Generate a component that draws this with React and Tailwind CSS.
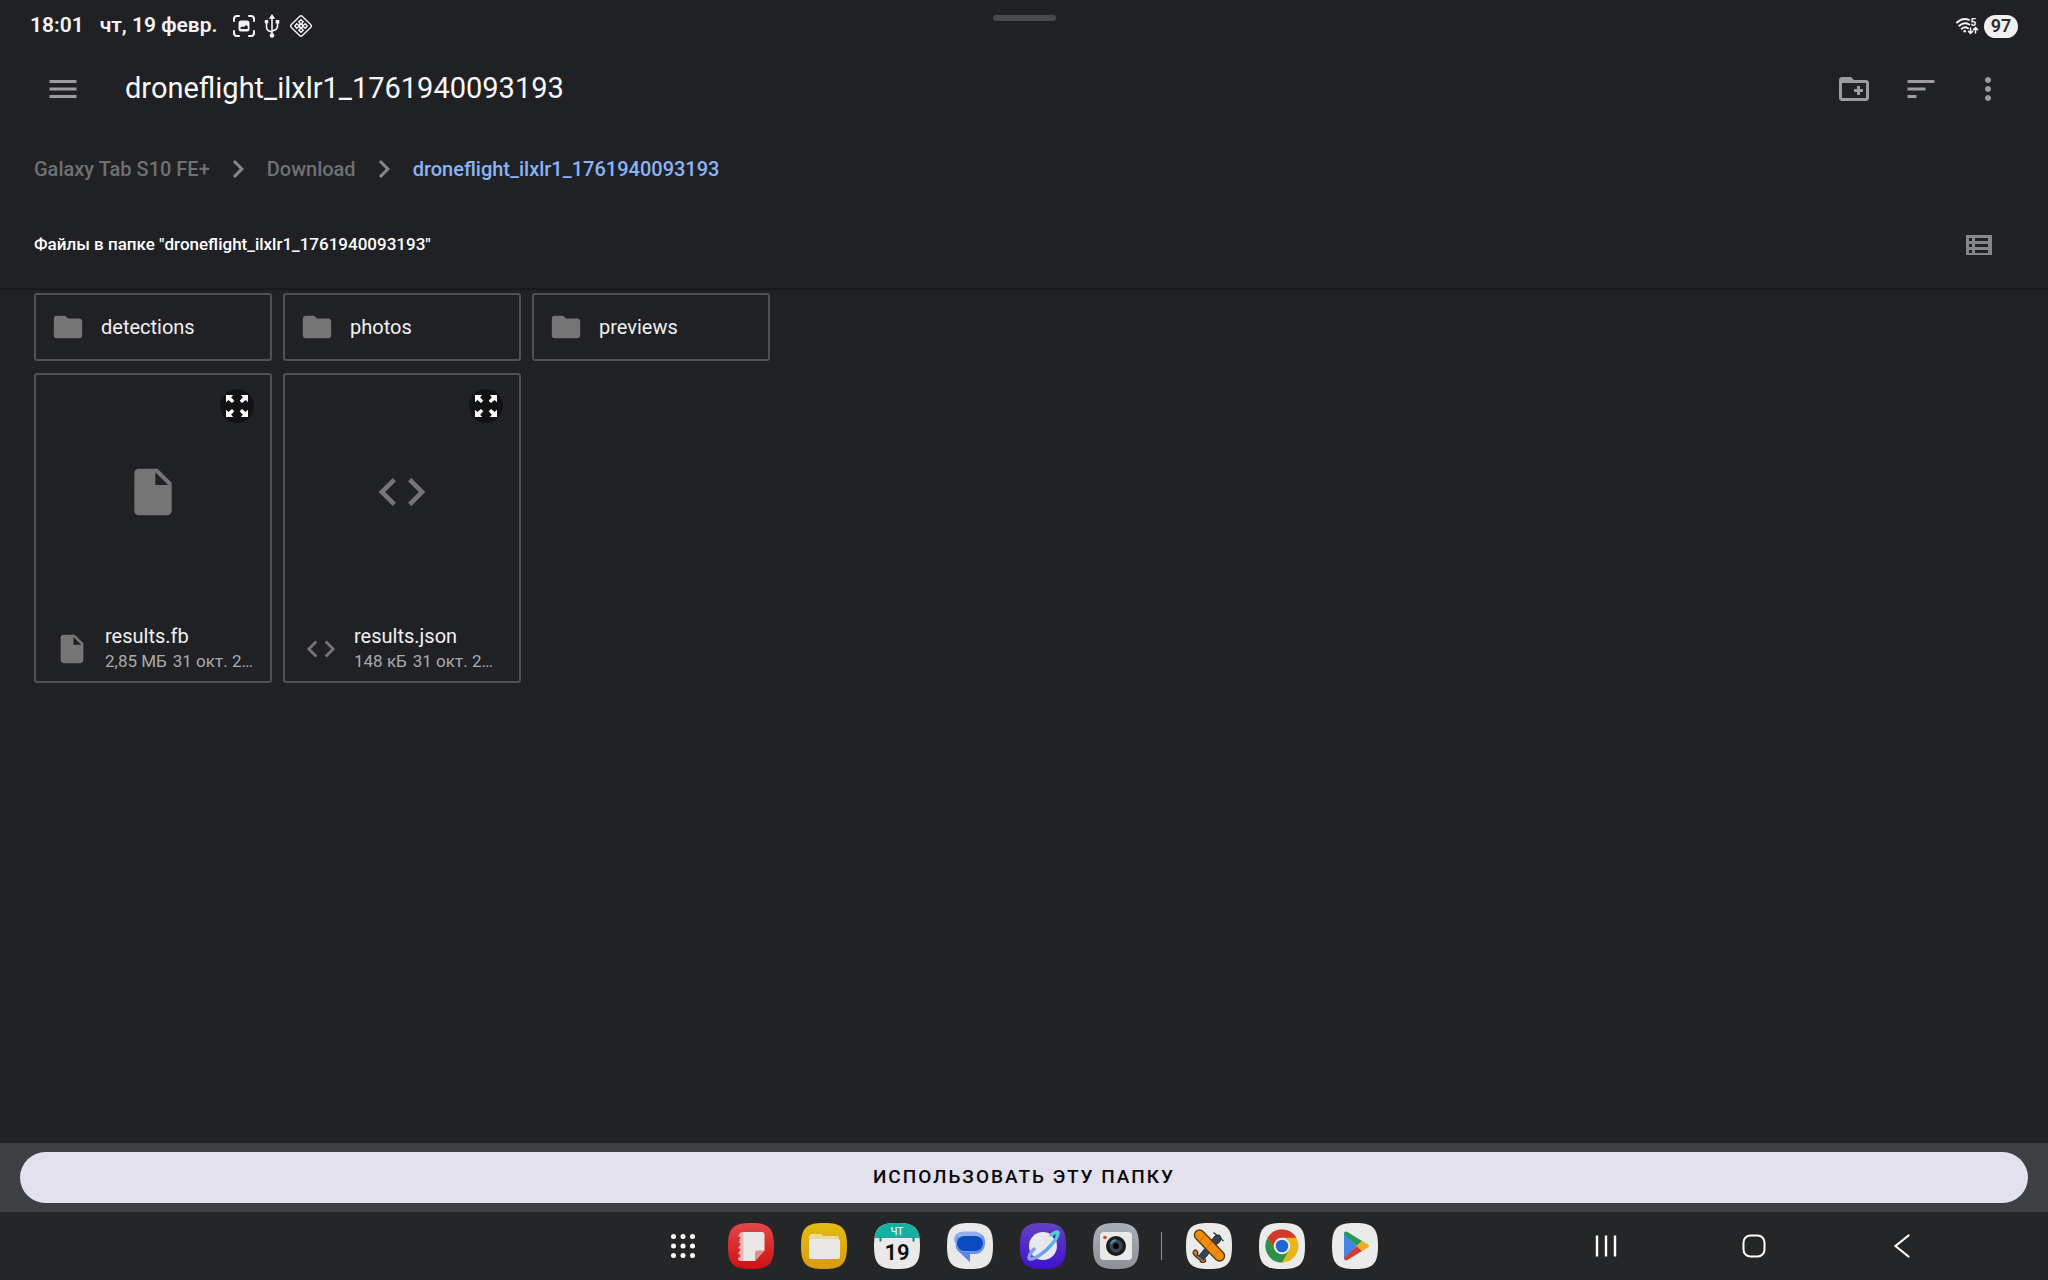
import React from "react";

const SQUIRCLE = "M0 23C0 5 5 0 23 0S46 5 46 23 41 46 23 46 0 41 0 23Z";

function Glyph({ d, className }) {
  return (
    <svg viewBox="0 0 24 24" fill="currentColor" className={className} aria-hidden="true">
      <path d={d} />
    </svg>
  );
}

const paths = {
  menu: "M3 18h18v-2H3v2zm0-5h18v-2H3v2zm0-7v2h18V6H3z",
  newFolder:
    "M20 6h-8l-2-2H4c-1.11 0-1.99.89-1.99 2L2 18c0 1.11.89 2 2 2h16c1.11 0 2-.89 2-2V8c0-1.11-.89-2-2-2zm0 12H4V8h16v10zm-8-4h2v2h2v-2h2v-2h-2v-2h-2v2h-2z",
  sort: "M3 18h6v-2H3v2zM3 6v2h18V6H3zm0 7h12v-2H3v2z",
  more: "M12 8c1.1 0 2-.9 2-2s-.9-2-2-2-2 .9-2 2 .9 2 2 2zm0 2c-1.1 0-2 .9-2 2s.9 2 2 2 2-.9 2-2-.9-2-2-2zm0 6c-1.1 0-2 .9-2 2s.9 2 2 2 2-.9 2-2-.9-2-2-2z",
  chevron: "M10 6L8.59 7.41 13.17 12l-4.58 4.59L10 18l6-6z",
  folder: "M10 4H4c-1.1 0-1.99.9-1.99 2L2 18c0 1.1.9 2 2 2h16c1.1 0 2-.9 2-2V8c0-1.1-.9-2-2-2h-8l-2-2z",
  file: "M6 2c-1.1 0-1.99.9-1.99 2L4 20c0 1.1.89 2 1.99 2H18c1.1 0 2-.9 2-2V8l-6-6H6zm7 7V3.500L18.500 9H13z",
  code: "M9.400 16.600L4.800 12l4.600-4.600L8 6l-6 6 6 6 1.400-1.400zm5.200 0l4.600-4.600-4.600-4.600L16 6l6 6-6 6-1.400-1.400z",
};

function ExpandIcon() {
  const arrow = "M0 0h7.200L5.100 2.200 8.300 5.700 6 8 2.400 4.900 0 7.200z";
  return (
    <svg viewBox="0 0 22 22" className="size-[22px]" fill="currentColor" aria-hidden="true">
      <path d={arrow} />
      <path d={arrow} transform="matrix(-1 0 0 1 22 0)" />
      <path d={arrow} transform="matrix(1 0 0 -1 0 22)" />
      <path d={arrow} transform="matrix(-1 0 0 -1 22 22)" />
    </svg>
  );
}

function CaptureIcon() {
  return (
    <svg viewBox="0 0 22 22" className="size-[22px]" fill="none" stroke="currentColor" strokeWidth="2" strokeLinecap="round" aria-hidden="true">
      <path d="M1 6V4a3 3 0 0 1 3-3h2M16 1h2a3 3 0 0 1 3 3v2M21 16v2a3 3 0 0 1-3 3h-2M6 21H4a3 3 0 0 1-3-3v-2" />
      <rect x="5.500" y="5.500" width="11" height="11" rx="2.500" fill="currentColor" stroke="none" />
      <path d="M7.500 14v-1.500l2-1 1.500.6 2-2.100 1.700 1.200V14z" fill="#202124" stroke="none" />
    </svg>
  );
}

function UsbIcon() {
  return (
    <svg viewBox="0 0 16 24" className="h-6 w-4" fill="none" stroke="currentColor" strokeWidth="1.600" aria-hidden="true">
      <path d="M8 3v18M8 18q-5.500-1-5.500-5V8M8 17q5.500-1 5.500-5V8" />
      <path d="M8 0l3.200 4.800H4.800zM11.700 6h3.600v3.600h-3.600z" fill="currentColor" stroke="none" />
      <circle cx="2.500" cy="7.800" r="2" fill="currentColor" stroke="none" />
      <circle cx="8" cy="21.500" r="2.300" fill="currentColor" stroke="none" />
    </svg>
  );
}

function DiamondIcon() {
  return (
    <svg viewBox="0 0 24 24" className="size-6" fill="none" stroke="currentColor" strokeWidth="1.400" aria-hidden="true">
      <rect x="4.200" y="4.200" width="15.600" height="15.600" rx="2" transform="rotate(45 12 12)" />
      <circle cx="12" cy="12" r="1.700" />
      <path d="M12 10.300L9.800 7.800 12 5.800l2.200 2zM12 13.700l-2.200 2.500 2.200 2 2.200-2zM10.300 12L7.800 9.800 5.800 12l2 2.200zM13.700 12l2.500-2.200 2 2.200-2 2.200z" />
    </svg>
  );
}

function WifiIcon() {
  return (
    <svg viewBox="0 0 24 18" className="h-[18px] w-6" fill="none" stroke="currentColor" strokeWidth="1.900" strokeLinecap="round" aria-hidden="true">
      <path d="M2 5.500C5.500 2 10 1.200 14 2.800M4.300 8.700c3-2.700 7-3 10-1.200M6.700 11.700c2-1.700 4.500-1.700 6.300-.5" />
      <circle cx="9.700" cy="14.200" r="1.300" fill="currentColor" stroke="none" />
      <path d="M15.500 11v5M13.500 14.400l2 2 2-2M20.500 16v-5M18.500 12.600l2-2 2 2" strokeWidth="1.500" />
      <text x="15.500" y="8.500" fontSize="10" fontWeight="700" fill="currentColor" stroke="none">5</text>
    </svg>
  );
}

function ListIcon() {
  return (
    <svg viewBox="0 0 26 20" className="h-5 w-[26px]" aria-hidden="true">
      <rect width="26" height="20" fill="#85868a" />
      <g fill="#202124">
        <rect x="3" y="3" width="3" height="3" />
        <rect x="9" y="3" width="13" height="3" />
        <rect x="3" y="9" width="3" height="3" />
        <rect x="9" y="9" width="13" height="3" />
        <rect x="3" y="15" width="3" height="3" />
        <rect x="9" y="15" width="13" height="3" />
      </g>
    </svg>
  );
}

function Folder({ name }) {
  return (
    <button type="button" className="flex h-[68px] items-center gap-4 rounded-[3px] border-2 border-[#505154] pl-[15px] text-left">
      <Glyph d={paths.folder} className="size-[34px] text-[#757575]" />
      <span className="text-xl text-[#f1f1f3]">{name}</span>
    </button>
  );
}

function File({ name, size, icon }) {
  return (
    <article className="relative flex h-[310px] flex-col rounded-[3px] border-2 border-[#505154]">
      <button type="button" aria-label={"Открыть " + name} className="absolute top-[14px] right-4 flex size-[34px] items-center justify-center rounded-full bg-[#111213] text-white">
        <ExpandIcon />
      </button>
      <div className="flex h-[233px] items-center justify-center text-[#757575]">
        <Glyph d={icon} className="size-14" />
      </div>
      <div className="mt-4 flex items-center gap-4 pl-[19px]">
        <Glyph d={icon} className="size-[34px] shrink-0 text-[#757575]" />
        <div>
          <h2 className="text-xl leading-6 text-[#f1f1f3]">{name}</h2>
          <p className="flex gap-[6px] text-[17px] leading-[26px] whitespace-nowrap text-[#a9aaad]">
            <span>{size}</span>
            <span>31 окт. 2…</span>
          </p>
        </div>
      </div>
    </article>
  );
}

function AppIcon({ label, fill, children }) {
  return (
    <button type="button" aria-label={label} className="size-[46px]">
      <svg viewBox="0 0 46 46" className="size-full" aria-hidden="true">
        <path d={SQUIRCLE} fill={fill} />
        {children}
      </svg>
    </button>
  );
}

function Dock() {
  return (
    <div className="flex items-center">
      <svg width="0" height="0" className="absolute" aria-hidden="true">
        <defs>
          <linearGradient id="red" x2="0" y2="1"><stop stopColor="#e2484a" /><stop offset="1" stopColor="#d00f12" /></linearGradient>
          <linearGradient id="yellow" x2="0" y2="1"><stop stopColor="#e3bd10" /><stop offset="1" stopColor="#d99a12" /></linearGradient>
          <linearGradient id="violet" x2="0" y2="1"><stop stopColor="#6440c4" /><stop offset="1" stopColor="#3f12cc" /></linearGradient>
          <linearGradient id="silver" x2="0" y2="1"><stop stopColor="#a9afb8" /><stop offset="1" stopColor="#8b9099" /></linearGradient>
          <linearGradient id="ring" x1="0" y1="1" x2="1" y2="0"><stop stopColor="#8fa0ee" /><stop offset=".5" stopColor="#57a5ea" /><stop offset="1" stopColor="#57cfd0" /></linearGradient>
          <clipPath id="tile"><path d={SQUIRCLE} /></clipPath>
        </defs>
      </svg>
      <button type="button" aria-label="Приложения" className="mr-[33px] size-6">
        <svg viewBox="0 0 24 24" fill="#fff" className="size-full" aria-hidden="true">
          {[2.5, 12, 21.5].map((y) => [2.5, 12, 21.5].map((x) => <circle key={x + "-" + y} cx={x} cy={y} r="2.500" />))}
        </svg>
      </button>
      <div className="flex gap-[27px]">
        <AppIcon label="Notes" fill="url(#red)">
          <path d="M14 9h19.500q3 0 3 3v15.500L27 38H14.500q-2.500 0-2.500-2.500z" fill="#e9e6e6" />
          <path d="M15.500 9v29h-3q-2.500 0-2.500-3l2-2.500-2-2.500 2-2.500-2-2.500 2-2.500-2-2.500 2-2.500-2-2.500q0-3 2.500-5.500z" fill="#efb5b5" />
          <g fill="#d92b2d">
            <circle cx="11" cy="15" r="1.400" /><circle cx="11" cy="21" r="1.400" /><circle cx="11" cy="27" r="1.400" /><circle cx="11" cy="33" r="1.400" />
          </g>
          <path d="M36.500 27.500L27 38v-8q0-2.500 2.500-2.500z" fill="#dc8d8c" />
        </AppIcon>
        <AppIcon label="My Files" fill="url(#yellow)">
          <path d="M8 20v-6q0-3 3-3h8q1.500 0 2.500 1l1 1H35q3 0 3 3v4z" fill="#ecd9a0" />
          <rect x="8" y="16" width="31" height="20" rx="2.500" fill="#e9e6e3" />
        </AppIcon>
        <AppIcon label="Calendar" fill="#e9e9ea">
          <path d="M0 0h46v15H0z" fill="#16afa2" clipPath="url(#tile)" />
          <path d="M6.500 14v4.500M39.500 14v4.500" stroke="#16877d" strokeWidth="2" />
          <text x="23" y="12" textAnchor="middle" fontSize="10" fontWeight="500" fill="#dff5f3">ЧТ</text>
          <text x="23" y="37" textAnchor="middle" fontSize="22" fontWeight="600" fill="#0c0c0c">19</text>
        </AppIcon>
        <AppIcon label="Messages" fill="#e9e9ea">
          <path d="M16 9h10c7 0 11 3 12 8 1 8-3 14-10 14h-5v8L12 29c-3-3-4-5-3-8C5 14 9 9 16 9z" fill="#6f93e6" />
          <path d="M17 8.500h9q7 0 9 5.500H10q-2 2-1 8Q3 10 17 8.500z" fill="#93aeea" />
          <rect x="10" y="13" width="26" height="15" rx="7.500" fill="#0b4bc0" />
          <path d="M10 26q3 3 7 3h6v10z" fill="#5c87e8" />
        </AppIcon>
        <AppIcon label="Internet" fill="url(#violet)">
          <circle cx="23" cy="23" r="14" fill="#e8e7ee" />
          <path d="M31 12C35 9 38 8 38 10c0 5-9 16-18 22-6 4-11 5-11 3 0-2 2-6 5-9" fill="none" stroke="url(#ring)" strokeWidth="3.500" strokeLinecap="round" />
          <circle cx="34" cy="14" r="1.300" fill="#1c3f94" />
        </AppIcon>
        <AppIcon label="Camera" fill="url(#silver)">
          <rect x="7" y="9" width="32" height="28" rx="4" fill="#eae9e9" />
          <circle cx="12" cy="14.500" r="1.800" fill="#d6403d" />
          <circle cx="23" cy="23" r="10" fill="#1a1b1d" />
          <circle cx="23" cy="23" r="6.500" fill="#3c4654" />
          <path d="M18 21a5.500 5.500 0 0 1 5-4" fill="none" stroke="#3d9fb8" strokeWidth="1.800" />
          <circle cx="23" cy="23" r="3" fill="#050506" />
        </AppIcon>
      </div>
      <div className="mr-6 ml-[22px] h-7 w-px bg-[#8e8f90]" />
      <div className="flex gap-[27px]">
        <AppIcon label="Drone Flight" fill="#ebebeb">
          <path d="M27.500 9.500l10 8.500" stroke="#263644" strokeWidth="1.300" />
          <path d="M12 34L29 13q5-3 6 2 0 4-4 6L17 37z" fill="#344451" stroke="#1b2732" />
          <path d="M8 27.500q2.500-1.500 3.500 1t-.5 3.500l5.500 3q2.500-.5 3 2t-2.500 2.500-3-2.500L8.500 32.500Q6 30 8 27.500z" fill="#c97a2e" stroke="#3a2c20" strokeWidth="1.200" />
          <path d="M13 33l4-5 5 4-5 6z" fill="#344451" />
          <rect x="18.500" y="3" width="10" height="39" rx="5" transform="rotate(-44 23.500 22.500)" fill="#f18d0a" stroke="#5b3a10" strokeWidth="1.400" />
          <path d="M13 19l6-7M20 26l6-7M28 33l6-7" stroke="#b9650a" strokeWidth=".8" />
        </AppIcon>
        <AppIcon label="Chrome" fill="#ebebeb">
          <circle cx="23" cy="23" r="16.500" fill="#e8b61b" />
          <path d="M8.700 14.750A16.500 16.500 0 0 1 37.300 14.750H23a8.250 8.250 0 0 0-7.140 12.400z" fill="#cf3a2c" />
          <path d="M8.700 14.750A16.500 16.500 0 0 0 23 39.500l7.140-12.400A8.250 8.250 0 0 1 15.860 27.100z" fill="#2b9049" />
          <circle cx="23" cy="23" r="8.200" fill="#f1f1f1" />
          <circle cx="23" cy="23" r="6.300" fill="#1d66d3" />
        </AppIcon>
        <AppIcon label="Play" fill="#ebebeb">
          <path d="M12 10v26l13-13z" fill="#4285e8" />
          <path d="M12 11q0-3.500 3.500-2L30 18l-5 5-13-12z" fill="#279957" />
          <path d="M12 35q0 3.500 3.500 2L30 28l-5-5-13 12z" fill="#d23c35" />
          <path d="M30 17.800l6 3.600q2 1.600 0 3.200l-6 3.600-5-5.200z" fill="#e8b21c" />
        </AppIcon>
      </div>
    </div>
  );
}

export default function App() {
  return (
    <div className="flex min-h-screen flex-col bg-[#202124] font-[Roboto,sans-serif] text-white">
      <header className="grid h-10 grid-cols-[1fr_auto_1fr] items-start px-[30px] text-[#f4f4f6]">
        <div className="flex h-[52px] items-center text-[21px] font-semibold">
          <time className="mr-4">18:01</time>
          <span className="mr-[15px]">чт, 19 февр.</span>
          <span className="flex items-center gap-[9px]">
            <CaptureIcon />
            <UsbIcon />
            <DiamondIcon />
          </span>
        </div>
        <div className="mt-[15px] h-[6px] w-[63px] rounded-full bg-[#48494c]" />
        <div className="flex h-[52px] items-center justify-end gap-[5px]">
          <WifiIcon />
          <span className="flex h-[23px] w-[34px] items-center justify-center rounded-full bg-[#f1f1f2] text-lg leading-none font-semibold text-[#2b2c2e]">97</span>
        </div>
      </header>

      <div className="flex h-[97px] items-center pr-[42px] pl-[45px] text-[#9b9c9f]">
        <button type="button" aria-label="Меню" className="mr-11">
          <Glyph d={paths.menu} className="size-9" />
        </button>
        <h1 className="flex-1 text-[29px] text-[#f8f8fa]">droneflight_ilxlr1_1761940093193</h1>
        <div className="flex gap-[31px]">
          <button type="button" aria-label="Новая папка"><Glyph d={paths.newFolder} className="size-9" /></button>
          <button type="button" aria-label="Сортировка"><Glyph d={paths.sort} className="size-9" /></button>
          <button type="button" aria-label="Ещё"><Glyph d={paths.more} className="size-9" /></button>
        </div>
      </div>

      <nav className="flex h-16 items-center px-[34px] text-xl font-medium text-[#6f7073]">
        <a href="#device">Galaxy Tab S10 FE+</a>
        <Glyph d={paths.chevron} className="mr-[11px] ml-[10px] size-9 text-[#85868a]" />
        <a href="#download">Download</a>
        <Glyph d={paths.chevron} className="mr-[11px] ml-[10px] size-9 text-[#85868a]" />
        <a href="#current" aria-current="page" className="text-[#8ab4f8]">droneflight_ilxlr1_1761940093193</a>
      </nav>

      <div className="flex h-[89px] items-center justify-between border-b-2 border-[#18191b] pr-14 pl-[34px]">
        <h2 className="text-[17px] font-medium">Файлы в папке "droneflight_ilxlr1_1761940093193"</h2>
        <button type="button" aria-label="Список"><ListIcon /></button>
      </div>

      <main className="flex-1 px-[34px] pt-[3px]">
        <div className="grid grid-cols-[repeat(auto-fill,238px)] gap-[11px]">
          <Folder name="detections" />
          <Folder name="photos" />
          <Folder name="previews" />
        </div>
        <div className="mt-3 grid grid-cols-[repeat(auto-fill,238px)] gap-[11px]">
          <File name="results.fb" size="2,85 МБ" icon={paths.file} />
          <File name="results.json" size="148 кБ" icon={paths.code} />
        </div>
      </main>

      <div className="bg-[#3c4043] px-5 py-[9px]">
        <button type="button" className="h-[51px] w-full rounded-full bg-[#e2e1ed] text-[19px] font-medium tracking-[2px] text-[#08080a]">
          ИСПОЛЬЗОВАТЬ ЭТУ ПАПКУ
        </button>
      </div>

      <footer className="grid h-[68px] grid-cols-[1fr_auto_1fr] items-center bg-[#252627]">
        <div />
        <Dock />
        <div className="flex justify-end pr-[72px] text-white">
          <button type="button" aria-label="Недавние" className="flex w-[148px] justify-center">
            <svg viewBox="0 0 24 24" className="size-6" stroke="currentColor" strokeWidth="2.400" aria-hidden="true"><path d="M3 1.500v21M12 1.500v21M21 1.500v21" /></svg>
          </button>
          <button type="button" aria-label="Домой" className="flex w-[148px] justify-center">
            <svg viewBox="0 0 24 24" className="size-6" fill="none" stroke="currentColor" strokeWidth="2" aria-hidden="true"><rect x="1.500" y="1.500" width="21" height="21" rx="7" /></svg>
          </button>
          <button type="button" aria-label="Назад" className="flex w-[148px] justify-center">
            <svg viewBox="0 0 24 24" className="size-6" fill="none" stroke="currentColor" strokeWidth="2.200" strokeLinecap="round" aria-hidden="true"><path d="M18.500 1.500L5.500 12l13 10.500" /></svg>
          </button>
        </div>
      </footer>
    </div>
  );
}
